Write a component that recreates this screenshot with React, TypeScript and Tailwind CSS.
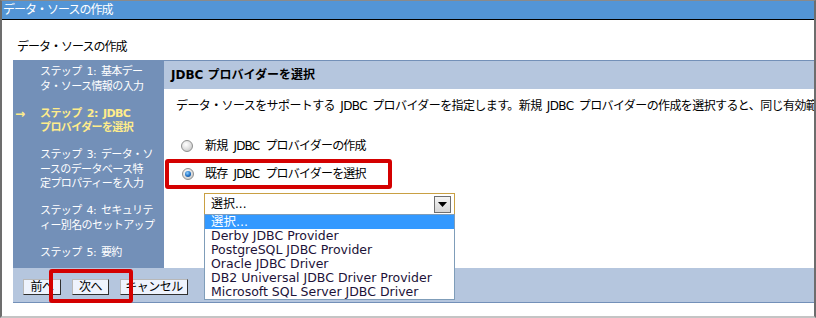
import React from 'react';

const steps = [
    { lines: ['ステップ 1: 基本デー', 'タ・ソース情報の入力'], current: false },
    { lines: ['ステップ 2: JDBC', 'プロバイダーを選択'], current: true },
    { lines: ['ステップ 3: データ・ソ', 'ースのデータベース特', '定プロパティーを入力'], current: false },
    { lines: ['ステップ 4: セキュリテ', 'ィー別名のセットアップ'], current: false },
    { lines: ['ステップ 5: 要約'], current: false },
];

const providers = [
    '選択...',
    'Derby JDBC Provider',
    'PostgreSQL JDBC Provider',
    'Oracle JDBC Driver',
    'DB2 Universal JDBC Driver Provider',
    'Microsoft SQL Server JDBC Driver',
];

const Radio = ({ checked }: { checked?: boolean }) => (
    <div className="w-[12px] h-[12px] rounded-full border border-[#8e8f8f] bg-[radial-gradient(circle_at_40%_35%,#ffffff_0%,#e4e4e4_45%,#b9b9b9_100%)] flex items-center justify-center">
        {checked && (
            <div className="w-[6px] h-[6px] rounded-full bg-[radial-gradient(circle_at_40%_35%,#8fd0ff_0%,#1d6fc4_55%,#0b3f7a_100%)]" />
        )}
    </div>
);

const NavButton = ({ label, width }: { label: string; width: string }) => (
    <button className={`${width} h-[16px] flex items-center justify-center bg-[#eef3fd] border-t border-l border-t-[#b8b8b8] border-l-[#b8b8b8] border-r border-b border-r-[#303030] border-b-[#303030] text-[12px] tracking-[-0.5px] leading-[14px] text-black`}>
        {label}
    </button>
);

const App = () => {
    return (
        <div className="w-[816px] h-[318px] bg-white flex flex-col border-t border-t-[#8a8a8a] border-l-2 border-l-[#6d6d6d] border-r-2 border-r-[#6d6d6d] border-b-2 border-b-[#c4c4c4] font-['DejaVu_Sans','Noto_Sans_CJK_JP',sans-serif] text-[12px] overflow-hidden">
            {/* title bar */}
            <div className="h-[19px] bg-[#5395d6] border-b border-b-black pl-[1px] flex items-center text-white leading-[14px] tracking-[-1px]">
                データ・ソースの作成
            </div>

            <div className="h-[40px] pl-[15px] pt-[20px] leading-[14px] text-black tracking-[-1px]">データ・ソースの作成</div>

            <div className="relative ml-[11px] flex flex-col">
                <div className="flex h-[208px]">
                    {/* wizard steps */}
                    <div className="w-[151px] shrink-0 bg-[#7390b8] pt-[5px] flex flex-col gap-[12.5px] text-[11px] tracking-[-0.6px] [word-spacing:2px]">
                        {steps.map((step, i) => (
                            <div key={i} className="flex">
                                <div className={`w-[27px] shrink-0 pl-[2px] leading-[14.5px] font-bold text-[12px] ${step.current ? 'text-[#ffec8a]' : ''}`}>
                                    {step.current ? '→' : ''}
                                </div>
                                <div className={`flex flex-col leading-[14.5px] whitespace-nowrap ${step.current ? 'text-[#ffec8a] font-bold' : 'text-white'}`}>
                                    {step.lines.map((line) => (
                                        <span key={line}>{line}</span>
                                    ))}
                                </div>
                            </div>
                        ))}
                    </div>

                    {/* content */}
                    <div className="flex-1 flex flex-col min-w-0">
                        <div className="h-[29px] bg-[#b5c6de] border-t border-t-[#7390b8] pl-[7px] flex items-center font-bold text-black leading-[14px]">
                            JDBC プロバイダーを選択
                        </div>
                        <div className="pl-[12px] pt-[10px] flex flex-col">
                            <p className="whitespace-nowrap overflow-hidden leading-[14px] text-black tracking-[-0.6px] [word-spacing:2px]">
                                データ・ソースをサポートする JDBC プロバイダーを指定します。新規 JDBC プロバイダーの作成を選択すると、同じ有効範囲で新規 JDBC プロバイダーが作成されます。
                            </p>
                            <div className="mt-[26px] h-[14px] flex items-center leading-[14px] tracking-[-0.8px] [word-spacing:3px]">
                                <div className="ml-[5px]"><Radio /></div>
                                <span className="ml-[12px] text-black">新規 JDBC プロバイダーの作成</span>
                            </div>
                            <div className="mt-[14px] h-[14px] flex items-center leading-[14px] tracking-[-0.8px] [word-spacing:3px]">
                                <div className="ml-[6px]"><Radio checked /></div>
                                <span className="ml-[11px] text-black">既存 JDBC プロバイダーを選択</span>
                            </div>
                            <div className="relative mt-[12px] ml-[28px] w-[251px] h-[22px] border border-[#c9a043] bg-white flex items-center justify-between pl-[6px] pr-[3px]">
                                <span className="leading-[14px] text-black">選択...</span>
                                <div className="w-[17px] h-[17px] border border-[#6f6f6f] bg-[linear-gradient(#f4f4f4,#d6d6d6)] flex items-center justify-center">
                                    <svg width="9" height="5" viewBox="0 0 9 5">
                                        <path d="M0 0h9L4.5 5z" fill="#000" />
                                    </svg>
                                </div>
                                {/* open list */}
                                <div className="absolute z-10 left-[-1px] top-[20px] w-[251px] border border-[#7f9db9] bg-white flex flex-col">
                                    {providers.map((p, i) => (
                                        <div key={p} className={`h-[14px] pl-[6px] flex items-center text-[12.5px] leading-[14px] whitespace-nowrap ${i === 0 ? 'bg-[#3399ff] text-white' : 'text-[#1c1238]'}`}>
                                            {p}
                                        </div>
                                    ))}
                                </div>
                            </div>
                        </div>
                    </div>
                </div>

                {/* button bar */}
                <div className="h-[35px] bg-[#b5c6de] border-b border-b-[#7390b8] pl-[10px] pt-[11px] flex gap-[11px]">
                    <NavButton label="前へ" width="w-[38px]" />
                    <NavButton label="次へ" width="w-[37px]" />
                    <NavButton label="キャンセル" width="w-[68px]" />
                </div>

                {/* annotation boxes */}
                <div className="absolute left-[152px] top-[99px] w-[227px] h-[30px] border-4 border-[#d40000] rounded-[3px]" />
                <div className="absolute left-[36px] top-[209px] w-[84px] h-[34px] border-4 border-[#d40000] rounded-[3px]" />
            </div>
        </div>
    );
};

export default App;
